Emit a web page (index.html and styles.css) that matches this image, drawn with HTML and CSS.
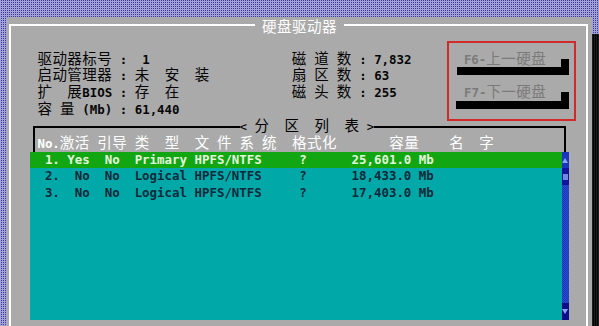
FILE: index.html
```html
<!DOCTYPE html>
<html lang="zh-CN">
<head>
<meta charset="utf-8">
<title>硬盘驱动器</title>
<link rel="stylesheet" href="styles.css">
</head>
<body>
<div class="desk">
  <div class="win">
    <div class="ftop">
      <div class="ft-l"></div>
      <div class="ttl"> <span class="c">硬盘驱动器</span> </div>
      <div class="ft-r"></div>
    </div>
    <div class="fbody">
      <div class="ln"></div>
      <div class="ln">   <span class="c">驱动器标号</span> :  1                   <span class="c">磁</span> <span class="c">道</span> <span class="c">数</span> : 7,832       <span class="btn">F6-<span class="c">上一硬盘</span></span>  <span class="sh-r"></span></div>
      <div class="ln">   <span class="c">启动管理器</span> : <span class="c">未</span>  <span class="c">安</span>  <span class="c">装</span>           <span class="c">扇</span> <span class="c">区</span> <span class="c">数</span> : 63         <span class="sh-b"></span></div>
      <div class="ln">   <span class="c">扩</span>  <span class="c">展</span>BIOS : <span class="c">存</span>  <span class="c">在</span>               <span class="c">磁</span> <span class="c">头</span> <span class="c">数</span> : 255         <span class="btn">F7-<span class="c">下一硬盘</span></span>  <span class="sh-r"></span></div>
      <div class="ln">   <span class="c">容</span> <span class="c">量</span> (Mb) : 61,440                                     <span class="sh-b"></span></div>
      <div class="box">
        <div class="cap">
          <div class="cap-l"></div>
          <div class="cap-t">&lt; <span class="c">分</span>  <span class="c">区</span>  <span class="c">列</span>  <span class="c">表</span> &gt;</div>
          <div class="cap-r"></div>
        </div>
        <div class="hdr"> No.<span class="c">激活</span> <span class="c">引导</span> <span class="c">类</span>  <span class="c">型</span>  <span class="c">文</span> <span class="c">件</span> <span class="c">系</span> <span class="c">统</span>  <span class="c">格式化</span>       <span class="c">容量</span>    <span class="c">名</span>  <span class="c">字</span></div>
        <div class="list">
          <div class="rows">
            <div class="row sel">  1. Yes  No  Primary HPFS/NTFS     ?      25,601.0 Mb</div>
            <div class="row">  2.  No  No  Logical HPFS/NTFS     ?      18,433.0 Mb</div>
            <div class="row">  3.  No  No  Logical HPFS/NTFS     ?      17,403.0 Mb</div>
          </div>
          <div class="sb">
            <div class="sb-up"><span class="tri-up"></span></div>
            <div class="sb-thumb"><span class="sq"></span></div>
            <div class="sb-track"></div>
            <div class="sb-dn"><span class="tri-dn"></span></div>
          </div>
        </div>
      </div>
    </div>
  </div>
  <div class="shadow"></div>
</div>
<div class="mark"></div>
</body>
</html>
```

FILE: styles.css
```css
* { box-sizing: border-box; }
html, body {
  margin: 0;
  padding: 0;
  width: 599px;
  height: 326px;
  overflow: hidden;
}
body {
  position: relative;
  font-family: "DejaVu Sans Mono", monospace;
  background-color: #3a3a92;
  background-image:
    repeating-linear-gradient(90deg, #a2a2d8 0 1px, transparent 1px 2px),
    repeating-linear-gradient(0deg, #a2a2d8 0 1px, transparent 1px 2px);
}
.desk {
  display: flex;
  height: 326px;
  padding-top: 16.85px;
  padding-left: 7.4875px;
}
.win {
  flex: none;
  width: 584.025px;
  background: #aaaaaa;
  padding: 0 3.8px 0 2px;
}
.shadow {
  flex: none;
  width: 7.4875px;
  margin-top: 16.85px;
  background-color: #050505;
  background-image: repeating-linear-gradient(90deg, #1d1d1d 0 1px, transparent 1px 2px);
}

/* window frame */
.ftop { display: flex; height: 16.85px; }
.ft-l {
  flex: none;
  width: 245.1px;
  margin-top: 7.4px;
  border-top: 2px solid #fff;
  border-left: 2px solid #fff;
}
.ttl {
  flex: none;
  width: 89.85px;
  white-space: pre;
  color: #fff;
  font-size: 12.437px;
  line-height: 16.85px;
  padding-top: 2px;
}
.ft-r {
  flex: 1;
  margin-top: 7.4px;
  border-top: 2px solid #fff;
  border-right: 2px solid #fff;
}
.fbody {
  height: 300px;
  border-left: 2px solid #fff;
  border-right: 2px solid #fff;
  padding-left: 3.49px;
}

/* text rows */
.ln {
  height: 16.85px;
  line-height: 16.85px;
  white-space: pre;
  font-size: 12.437px;
  font-weight: 700;
  color: #050505;
}
.c {
  font-family: "Noto Sans CJK SC", sans-serif;
  font-size: 14.5px;
  line-height: 14px;
  letter-spacing: 0.475px;
  font-weight: 400;
}
.btn { color: #7a7a7a; }
.sh-r {
  display: inline-block;
  vertical-align: top;
  width: 7.4875px;
  height: 16.85px;
  background: linear-gradient(transparent 50%, #000 50%);
}
.sh-b {
  display: inline-block;
  vertical-align: top;
  width: 112.31px;
  height: 16.85px;
  background: linear-gradient(#000 50%, transparent 50%);
}

/* partition box */
.box { margin-left: 14.975px; width: 539.1px; }
.cap { display: flex; height: 16.85px; }
.cap-l {
  flex: none;
  width: 206.91px;
  margin: 8.4px 0 0 2.74px;
  border-top: 2px solid #000;
  border-left: 2px solid #000;
}
.cap-t {
  flex: none;
  white-space: pre;
  font-size: 12.437px;
  line-height: 16.85px;
  color: #000;
}
.cap-r {
  flex: 1;
  margin: 8.4px 2.74px 0 0;
  border-top: 2px solid #000;
  border-right: 2px solid #000;
}
.hdr {
  height: 16.85px;
  line-height: 16.85px;
  white-space: pre;
  font-size: 12.437px;
  font-weight: 700;
  color: #fff;
  background:
    linear-gradient(#000, #000) left 2.74px top 0 / 2px 100% no-repeat,
    linear-gradient(#000, #000) right 2.74px top 0 / 2px 100% no-repeat;
}
.list { display: flex; height: 168.5px; }
.rows { flex: none; width: 531.61px; background: #00a8a8; }
.row {
  height: 16.85px;
  line-height: 16.85px;
  white-space: pre;
  font-size: 12.437px;
  font-weight: 700;
  color: #0e2a3a;
}
.row.sel { background: #12a612; color: #e4f6dc; }

/* scrollbar */
.sb {
  flex: none;
  width: 7.4875px;
  display: flex;
  flex-direction: column;
}
.sb-up, .sb-thumb, .sb-dn {
  height: 16.85px;
  display: flex;
  align-items: center;
  justify-content: center;
}
.sb-up { background: #1a34c2; }
.sb-thumb { background: #12129e; }
.sb-dn { background: #0c0c8a; }
.sb-track {
  flex: 1;
  background: repeating-conic-gradient(#1a36bc 0 25%, #2c4cd2 0 50%) 0 0 / 2px 2px;
}
.tri-up {
  width: 0; height: 0;
  border-left: 3px solid transparent;
  border-right: 3px solid transparent;
  border-bottom: 5px solid #8aa2ff;
}
.tri-dn {
  width: 0; height: 0;
  border-left: 3px solid transparent;
  border-right: 3px solid transparent;
  border-top: 5px solid #8aa2ff;
}
.sq { width: 5px; height: 6px; background: #7088e6; }

/* red annotation rectangle drawn over the screenshot */
.mark {
  position: absolute;
  left: 447px;
  top: 41px;
  width: 129px;
  height: 80px;
  border: 2px solid #cf2b2b;
}
```
